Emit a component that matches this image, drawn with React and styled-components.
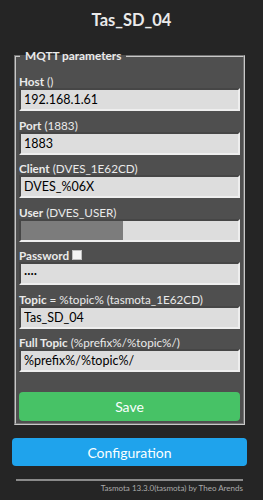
import React from 'react';
import styled, { createGlobalStyle } from 'styled-components';

const GlobalStyle = createGlobalStyle`
  html, body {
    margin: 0;
    padding: 0;
    background: #252525;
  }
  body {
    font-family: Lato, "Open Sans", sans-serif;
    color: #eaeaea;
  }
`;

const Page = styled.div`
  width: 263px;
  padding-top: 9px;
  box-sizing: border-box;
`;

const Title = styled.h2`
  margin: 0 0 17px;
  text-align: center;
  font-size: 16.5px;
  line-height: 22px;
  font-weight: 700;
  color: #eaeaea;
`;

const Fieldset = styled.fieldset`
  margin: 0 18px 0 14px;
  padding: 0 3px 1px;
  border: 2px groove #c8c8c8;
  background: #4f4f4f;
  min-width: 0;
`;

const Legend = styled.legend`
  margin-left: 1px;
  padding: 0 5px 0 5px;
  font-size: 11.8px;
  line-height: 16px;
  font-weight: 700;
`;

const Fields = styled.div`
  display: flex;
  flex-direction: column;
  gap: 6.5px;
  padding-top: 10px;
`;

const Field = styled.div`
  display: flex;
  flex-direction: column;
`;

const Label = styled.label`
  display: flex;
  align-items: center;
  font-size: 11.7px;
  line-height: 14px;
  height: 14px;
  white-space: nowrap;
  b {
    font-weight: 700;
  }
`;

const Hint = styled.span`
  font-weight: 400;
  margin-left: 3px;
`;

const Check = styled.span`
  display: inline-block;
  width: 8px;
  height: 8px;
  background: #f4f4f4;
  border: 1px solid #c0c0c0;
  margin-left: 3px;
`;

const Input = styled.input`
  box-sizing: border-box;
  width: 100%;
  height: 23px;
  margin: 0;
  padding: 0 3px;
  border: 2px inset #eee;
  border-top-color: #9a9a9a;
  border-left-color: #9a9a9a;
  background: ${p => p.$blocked
    ? 'linear-gradient(to right, #7c7c7c 0 102px, #dddddd 102px)'
    : '#dddddd'};
  color: #000;
  font-family: Lato, "Open Sans", sans-serif;
  font-size: 12.5px;
  outline: none;
`;

const Button = styled.button`
  display: block;
  box-sizing: border-box;
  width: 100%;
  border: 0;
  border-radius: 4px;
  background: ${p => p.$green ? '#47c266' : '#1fa3ec'};
  color: #faffff;
  font-family: Lato, "Open Sans", sans-serif;
  font-size: 14px;
  height: ${p => p.$green ? '29px' : '28px'};
  padding: 0;
  cursor: pointer;
`;

const SaveWrap = styled.div`
  margin-top: 20px;
  padding-bottom: 1px;
`;

const ConfigWrap = styled.div`
  margin: 13px 16px 0 12px;
`;

const Rule = styled.hr`
  margin: 13px 20px 0 16px;
  height: 2px;
  border: 0;
  background: #8a8a8a;
`;

const Footer = styled.div`
  margin: 0 20px 0 0;
  text-align: right;
  font-size: 8px;
  line-height: 14px;
  color: #aaaaaa;
`;

const fields = [
  { key: 'host', name: 'Host', hint: '()', value: '192.168.1.61' },
  { key: 'port', name: 'Port', hint: '(1883)', value: '1883' },
  { key: 'client', name: 'Client', hint: '(DVES_1E62CD)', value: 'DVES_%06X' },
  { key: 'user', name: 'User', hint: '(DVES_USER)', value: '', blocked: true },
  { key: 'pass', name: 'Password', value: '····', check: true },
  { key: 'topic', name: 'Topic', hint: '= %topic% (tasmota_1E62CD)', value: 'Tas_SD_04' },
  { key: 'full', name: 'Full Topic', hint: '(%prefix%/%topic%/)', value: '%prefix%/%topic%/' },
];

export default function App() {
  return (
    <Page>
      <GlobalStyle />
      <Title>Tas_SD_04</Title>
      <Fieldset>
        <Legend>MQTT parameters</Legend>
        <Fields>
          {fields.map(f => (
            <Field key={f.key}>
              <Label>
                <b>{f.name}</b>
                {f.hint && <Hint>{f.hint}</Hint>}
                {f.check && <Check />}
              </Label>
              <Input readOnly value={f.value} $blocked={f.blocked} />
            </Field>
          ))}
        </Fields>
        <SaveWrap>
          <Button $green>Save</Button>
        </SaveWrap>
      </Fieldset>
      <ConfigWrap>
        <Button>Configuration</Button>
      </ConfigWrap>
      <Rule />
      <Footer>Tasmota 13.3.0(tasmota) by Theo Arends</Footer>
    </Page>
  );
}
